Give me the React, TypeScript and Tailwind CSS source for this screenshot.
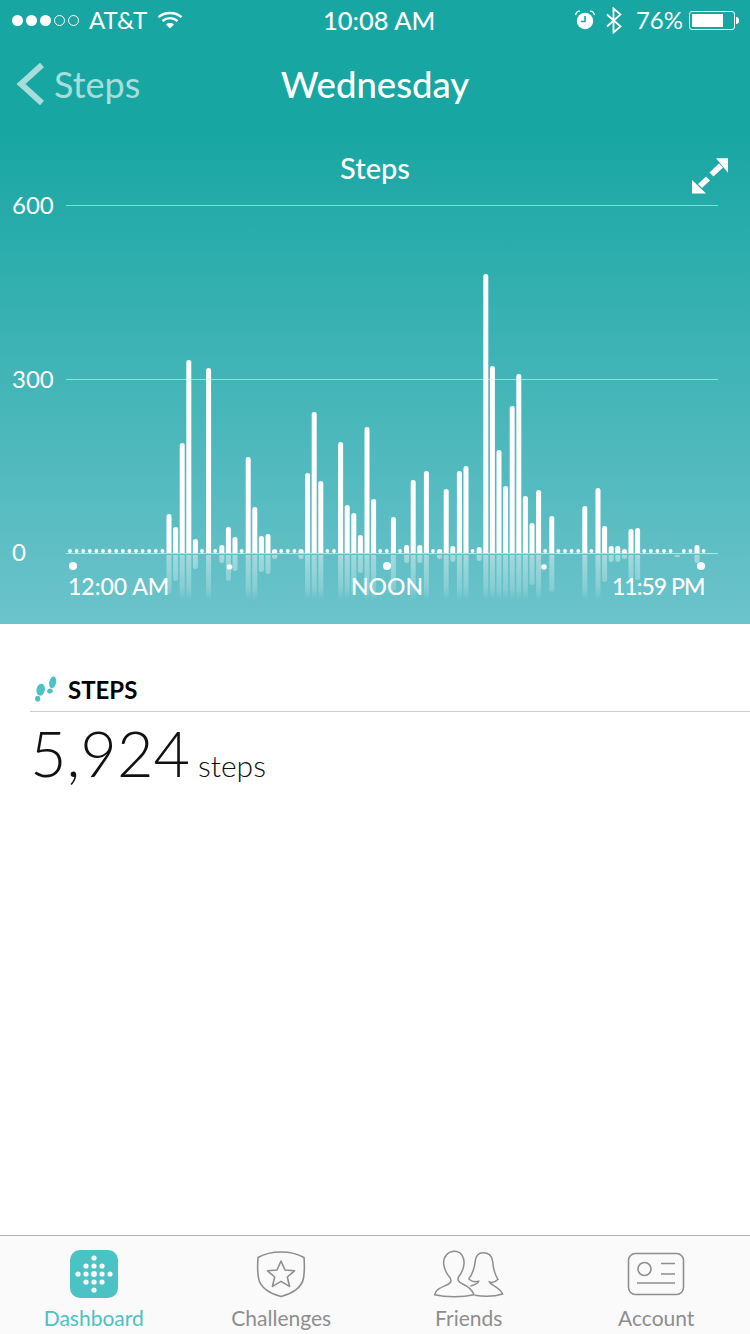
import React from 'react';

// step count drawn as bar height in px, index = 15 minute slot
const bars: Record<number, number> = {
    15: 39, 16: 26, 17: 110, 18: 193, 19: 14, 21: 185, 23: 8, 24: 26, 25: 16, 27: 96, 28: 46, 29: 17, 30: 19, 31: 4,
    35: 4, 36: 80, 37: 141, 38: 72, 41: 111, 42: 48, 43: 40, 44: 18, 45: 126, 46: 54, 49: 36, 51: 8, 52: 73, 53: 8,
    54: 82, 56: 4, 57: 64, 58: 7, 59: 82, 60: 87, 62: 6, 63: 279, 64: 187, 65: 103, 66: 67, 67: 147, 68: 179, 69: 57,
    70: 30, 71: 63, 73: 37, 78: 47, 80: 65, 81: 27, 82: 7, 83: 7, 84: 4, 85: 24, 86: 25, 95: 8
};
const slots = Array.from({ length: 97 }, (_, i) => i);
const slotX = (i: number) => 70 + i * 6.6;
const baseY = 553;

function StepsChart() {
    return (
        <svg viewBox="0 190 750 434" className="block w-full h-full">
            <defs>
                <linearGradient id="fade" gradientUnits="userSpaceOnUse" x1="0" y1="555" x2="0" y2="600">
                    <stop offset="0" stopColor="#fff" stopOpacity="0.42" />
                    <stop offset="0.75" stopColor="#fff" stopOpacity="0.2" />
                    <stop offset="1" stopColor="#fff" stopOpacity="0" />
                </linearGradient>
            </defs>
            <line x1="66" x2="718" y1="205.5" y2="205.5" stroke="#fff" strokeOpacity="0.5" />
            <line x1="66" x2="718" y1="379.5" y2="379.5" stroke="#fff" strokeOpacity="0.5" />
            <line x1="66" x2="718" y1="553.5" y2="553.5" stroke="#fff" strokeOpacity="0.55" />
            {slots.map(i => {
                const h = bars[i];
                const x = slotX(i);
                if (!h) {
                    if (i === 92) return <rect key={i} x={x - 2.5} y={555} width={5} height={2} fill="#fff" fillOpacity="0.4" />;
                    return <circle key={i} cx={x} cy={551} r={1.9} fill="#fff" />;
                }
                const len = Math.min(h, 46);
                return (
                    <g key={i}>
                        <path
                            d={`M${x - 2.5} ${baseY}V${baseY - h + 2}a2.5 2 0 0 1 5 0V${baseY}Z`}
                            fill="#fff"
                        />
                        <path
                            d={`M${x - 2.5} 555V${555 + len - 2}a2.5 2 0 0 0 5 0V555Z`}
                            fill="url(#fade)"
                        />
                    </g>
                );
            })}
            <circle cx="73" cy="566" r="4" fill="#fff" />
            <circle cx="229.5" cy="567" r="2.8" fill="#fff" />
            <circle cx="387" cy="566" r="4" fill="#fff" />
            <circle cx="544" cy="567" r="2.8" fill="#fff" />
            <circle cx="701" cy="566" r="4" fill="#fff" />
        </svg>
    );
}

function SignalDots() {
    return (
        <div className="flex gap-[3px] ml-3">
            <div className="w-[11px] h-[11px] rounded-full bg-white" />
            <div className="w-[11px] h-[11px] rounded-full bg-white" />
            <div className="w-[11px] h-[11px] rounded-full bg-white" />
            <div className="w-[11px] h-[11px] rounded-full border border-white" />
            <div className="w-[11px] h-[11px] rounded-full border border-white" />
        </div>
    );
}

function Wifi() {
    return (
        <svg width="26" height="18" viewBox="0 0 26 18" fill="none" stroke="#fff" strokeWidth="2.4">
            <path d="M1.5 6.2C8 .6 18 .6 24.5 6.2" />
            <path d="M5.5 10C10 6.2 16 6.2 20.5 10" />
            <path d="M13 17.5L9 13.4C11.2 11.6 14.8 11.6 17 13.4Z" fill="#fff" stroke="none" />
        </svg>
    );
}

function Alarm() {
    return (
        <svg width="20" height="20" viewBox="0 0 20 20">
            <circle cx="10" cy="11" r="8.2" fill="#fff" />
            <path d="M10 6v5.5H5.8" fill="none" stroke="#18a6a3" strokeWidth="1.6" />
            <path d="M.6 5.2C1 2.6 2.8 1.2 5 1.2M19.4 5.2C19 2.6 17.2 1.2 15 1.2" fill="none" stroke="#fff" strokeWidth="1.3" />
        </svg>
    );
}

function Bluetooth() {
    return (
        <svg width="16" height="27" viewBox="0 0 16 27" fill="none" stroke="#fff" strokeWidth="1.8">
            <path d="M1 7.5L14.5 19.5L7.5 25.5V1.5L14.5 7.5L1 19.5" />
        </svg>
    );
}

function Battery() {
    return (
        <div className="flex items-center gap-[1px]">
            <div className="w-[46px] h-[19px] rounded-[3px] border border-white p-[2px]">
                <div className="w-[31px] h-full bg-white" />
            </div>
            <div className="w-[3px] h-[7px] bg-white rounded-r-sm" />
        </div>
    );
}

function ExpandIcon() {
    return (
        <svg width="37" height="36" viewBox="0 0 37 36" fill="#fff">
            <path d="M24 .3H36V14.7Z" />
            <path d="M0 35.5V22L14 35.5Z" />
            <path d="M27 5.5L31 9.5L21.5 18.5L17.5 14.5Z" />
            <path d="M14 18.5L18 22.5L10 30L6 26Z" />
        </svg>
    );
}

function Footprints() {
    return (
        <svg width="24" height="28" viewBox="0 0 24 28" fill="#4bc2c3">
            <ellipse cx="6.7" cy="13.7" rx="4.2" ry="6" transform="rotate(12 6.7 13.7)" />
            <ellipse cx="3.7" cy="22.7" rx="2.6" ry="2.9" />
            <ellipse cx="18.7" cy="6.3" rx="3.4" ry="6" transform="rotate(12 18.7 6.3)" />
            <ellipse cx="16" cy="15" rx="2.8" ry="2.4" transform="rotate(-20 16 15)" />
        </svg>
    );
}

function DashboardIcon() {
    const rows = [[0], [-1, 0, 1], [-2, -1, 0, 1, 2], [-1, 0, 1], [0]];
    return (
        <div className="w-12 h-12 rounded-[10px] bg-[#4bc2c3]">
            <svg width="48" height="48" viewBox="0 0 48 48" fill="#fff">
                {rows.map((row, r) =>
                    row.map(c => <circle key={`${r}${c}`} cx={24 + c * 8} cy={24 + (r - 2) * 8} r={c === 0 && r === 2 ? 2.9 : 2.6} />)
                )}
            </svg>
        </div>
    );
}

function ChallengesIcon() {
    return (
        <svg width="50" height="48" viewBox="0 0 50 48" fill="none" stroke="#8e8e8e" strokeWidth="1.6">
            <path d="M2 7.5C9 3.5 17 2 25 2C33 2 41 3.5 48 7.5C48.5 14 48.5 22 47.5 28C46 38 35 44 25 46.5C15 44 4 38 2.5 28C1.5 22 1.5 14 2 7.5Z" />
            <path d="M25 11L29 20L38.5 20.8L31.3 27L33.6 36.4L25 31.4L16.4 36.4L18.7 27L11.5 20.8L21 20Z" strokeLinejoin="round" />
        </svg>
    );
}

function FriendsIcon() {
    return (
        <svg width="74" height="50" viewBox="170 55 222 150" fill="none" stroke="#8e8e8e" strokeWidth="4.5">
            <path d="M178 192C180 176 200 170 220 160C230 154 229 146 220 136C212 126 207 116 205 100C203 76 220 62 237 62C255 62 268 76 266 100C265 116 258 128 250 138C245 148 250 155 262 160C280 168 290 176 296 192C260 201 210 200 178 192Z" />
            <path d="M280 145C292 130 298 110 300 90C302 74 310 66 323 66C338 66 350 74 352 92C354 115 358 132 368 146C360 155 350 157 342 154C346 164 372 168 382 190C360 197 325 198 298 194M280 145C288 152 298 155 310 152C310 158 300 162 285 166" />
        </svg>
    );
}

function AccountIcon() {
    return (
        <svg width="58" height="44" viewBox="0 0 58 44" fill="none" stroke="#8e8e8e" strokeWidth="1.6">
            <rect x="1.5" y="1.5" width="55" height="41" rx="7" />
            <circle cx="17.5" cy="17" r="6.5" />
            <path d="M34 11.5H48M34 22H48M10 31H48" />
        </svg>
    );
}

const tabs = [
    { label: 'Dashboard', icon: <DashboardIcon />, active: true },
    { label: 'Challenges', icon: <ChallengesIcon />, active: false },
    { label: 'Friends', icon: <FriendsIcon />, active: false },
    { label: 'Account', icon: <AccountIcon />, active: false }
];

export default function App() {
    return (
        <div className="w-[750px] h-[1334px] flex flex-col bg-white overflow-hidden font-['Lato',sans-serif]">
            <div className="h-[624px] flex flex-col text-white bg-[linear-gradient(180deg,#18a6a3_0px,#18a6a3_130px,#6cc3cb_624px)]">
                {/* status bar */}
                <div className="h-10 relative flex items-center justify-between pr-[11px] text-[24px]">
                    <div className="flex items-center">
                        <SignalDots />
                        <span className="ml-[10px]">AT&amp;T</span>
                        <div className="ml-[10px]"><Wifi /></div>
                    </div>
                    <span className="absolute left-[323px] text-[25.5px] font-medium">10:08 AM</span>
                    <div className="flex items-center">
                        <Alarm />
                        <div className="ml-[11px]"><Bluetooth /></div>
                        <span className="ml-[14px]">76%</span>
                        <div className="ml-[6px]"><Battery /></div>
                    </div>
                </div>

                {/* nav */}
                <div className="h-[90px] relative flex items-center justify-center pb-[2px]">
                    <div className="absolute left-[15px] flex items-center gap-[9px] text-[#a7dedc] text-[36px]">
                        <svg width="30" height="44" viewBox="0 0 30 44" fill="none" stroke="#a7dedc" strokeWidth="6">
                            <path d="M27 3L6 22L27 41" />
                        </svg>
                        <span>Steps</span>
                    </div>
                    <h1 className="text-[36.5px] font-medium">Wednesday</h1>
                </div>

                {/* chart title */}
                <div className="h-[60px] relative flex justify-center pt-[23px]">
                    <span className="text-[29px] font-medium leading-[30px]">Steps</span>
                    <div className="absolute left-[692px] top-[28px]"><ExpandIcon /></div>
                </div>

                {/* chart */}
                <div className="relative flex-1">
                    <StepsChart />
                    <span className="absolute left-[12px] top-[1px] text-[24px] leading-[28px]">600</span>
                    <span className="absolute left-[12px] top-[175px] text-[24px] leading-[28px]">300</span>
                    <span className="absolute left-[12px] top-[348px] text-[24px] leading-[28px]">0</span>
                    <span className="absolute left-[68px] top-[382px] text-[23px] leading-[28px] font-medium">12:00 AM</span>
                    <span className="absolute left-[351px] top-[382px] text-[23px] leading-[28px] font-medium">NOON</span>
                    <span className="absolute left-[612px] top-[382px] text-[23px] tracking-[-1px] leading-[28px] font-medium">11:59 PM</span>
                </div>
            </div>

            {/* summary */}
            <div className="flex-1 pl-[30px] pt-[50px]">
                <div className="h-[38px] flex items-center gap-[10px] border-b border-[#cccccc] pl-[4px] pb-[6px]">
                    <Footprints />
                    <span className="text-[24px] font-bold text-black leading-none">STEPS</span>
                </div>
                <div className="flex items-baseline gap-2 text-[#111] mt-[1px]">
                    <span className="text-[63px] font-light leading-[80px]">5,924</span>
                    <span className="text-[30px] font-light">steps</span>
                </div>
            </div>

            {/* tab bar */}
            <div className="h-[99px] grid grid-cols-4 bg-[#fafafa] border-t border-[#b2b2b2] pt-[14px]">
                {tabs.map(tab => (
                    <div key={tab.label} className="flex flex-col items-center">
                        <div className="h-12 mb-[7px] flex items-center">{tab.icon}</div>
                        <span className={`text-[21px] leading-[26px] ${tab.active ? 'text-[#4bc2c3]' : 'text-[#8e8e8e]'}`}>
                            {tab.label}
                        </span>
                    </div>
                ))}
            </div>
        </div>
    );
}
